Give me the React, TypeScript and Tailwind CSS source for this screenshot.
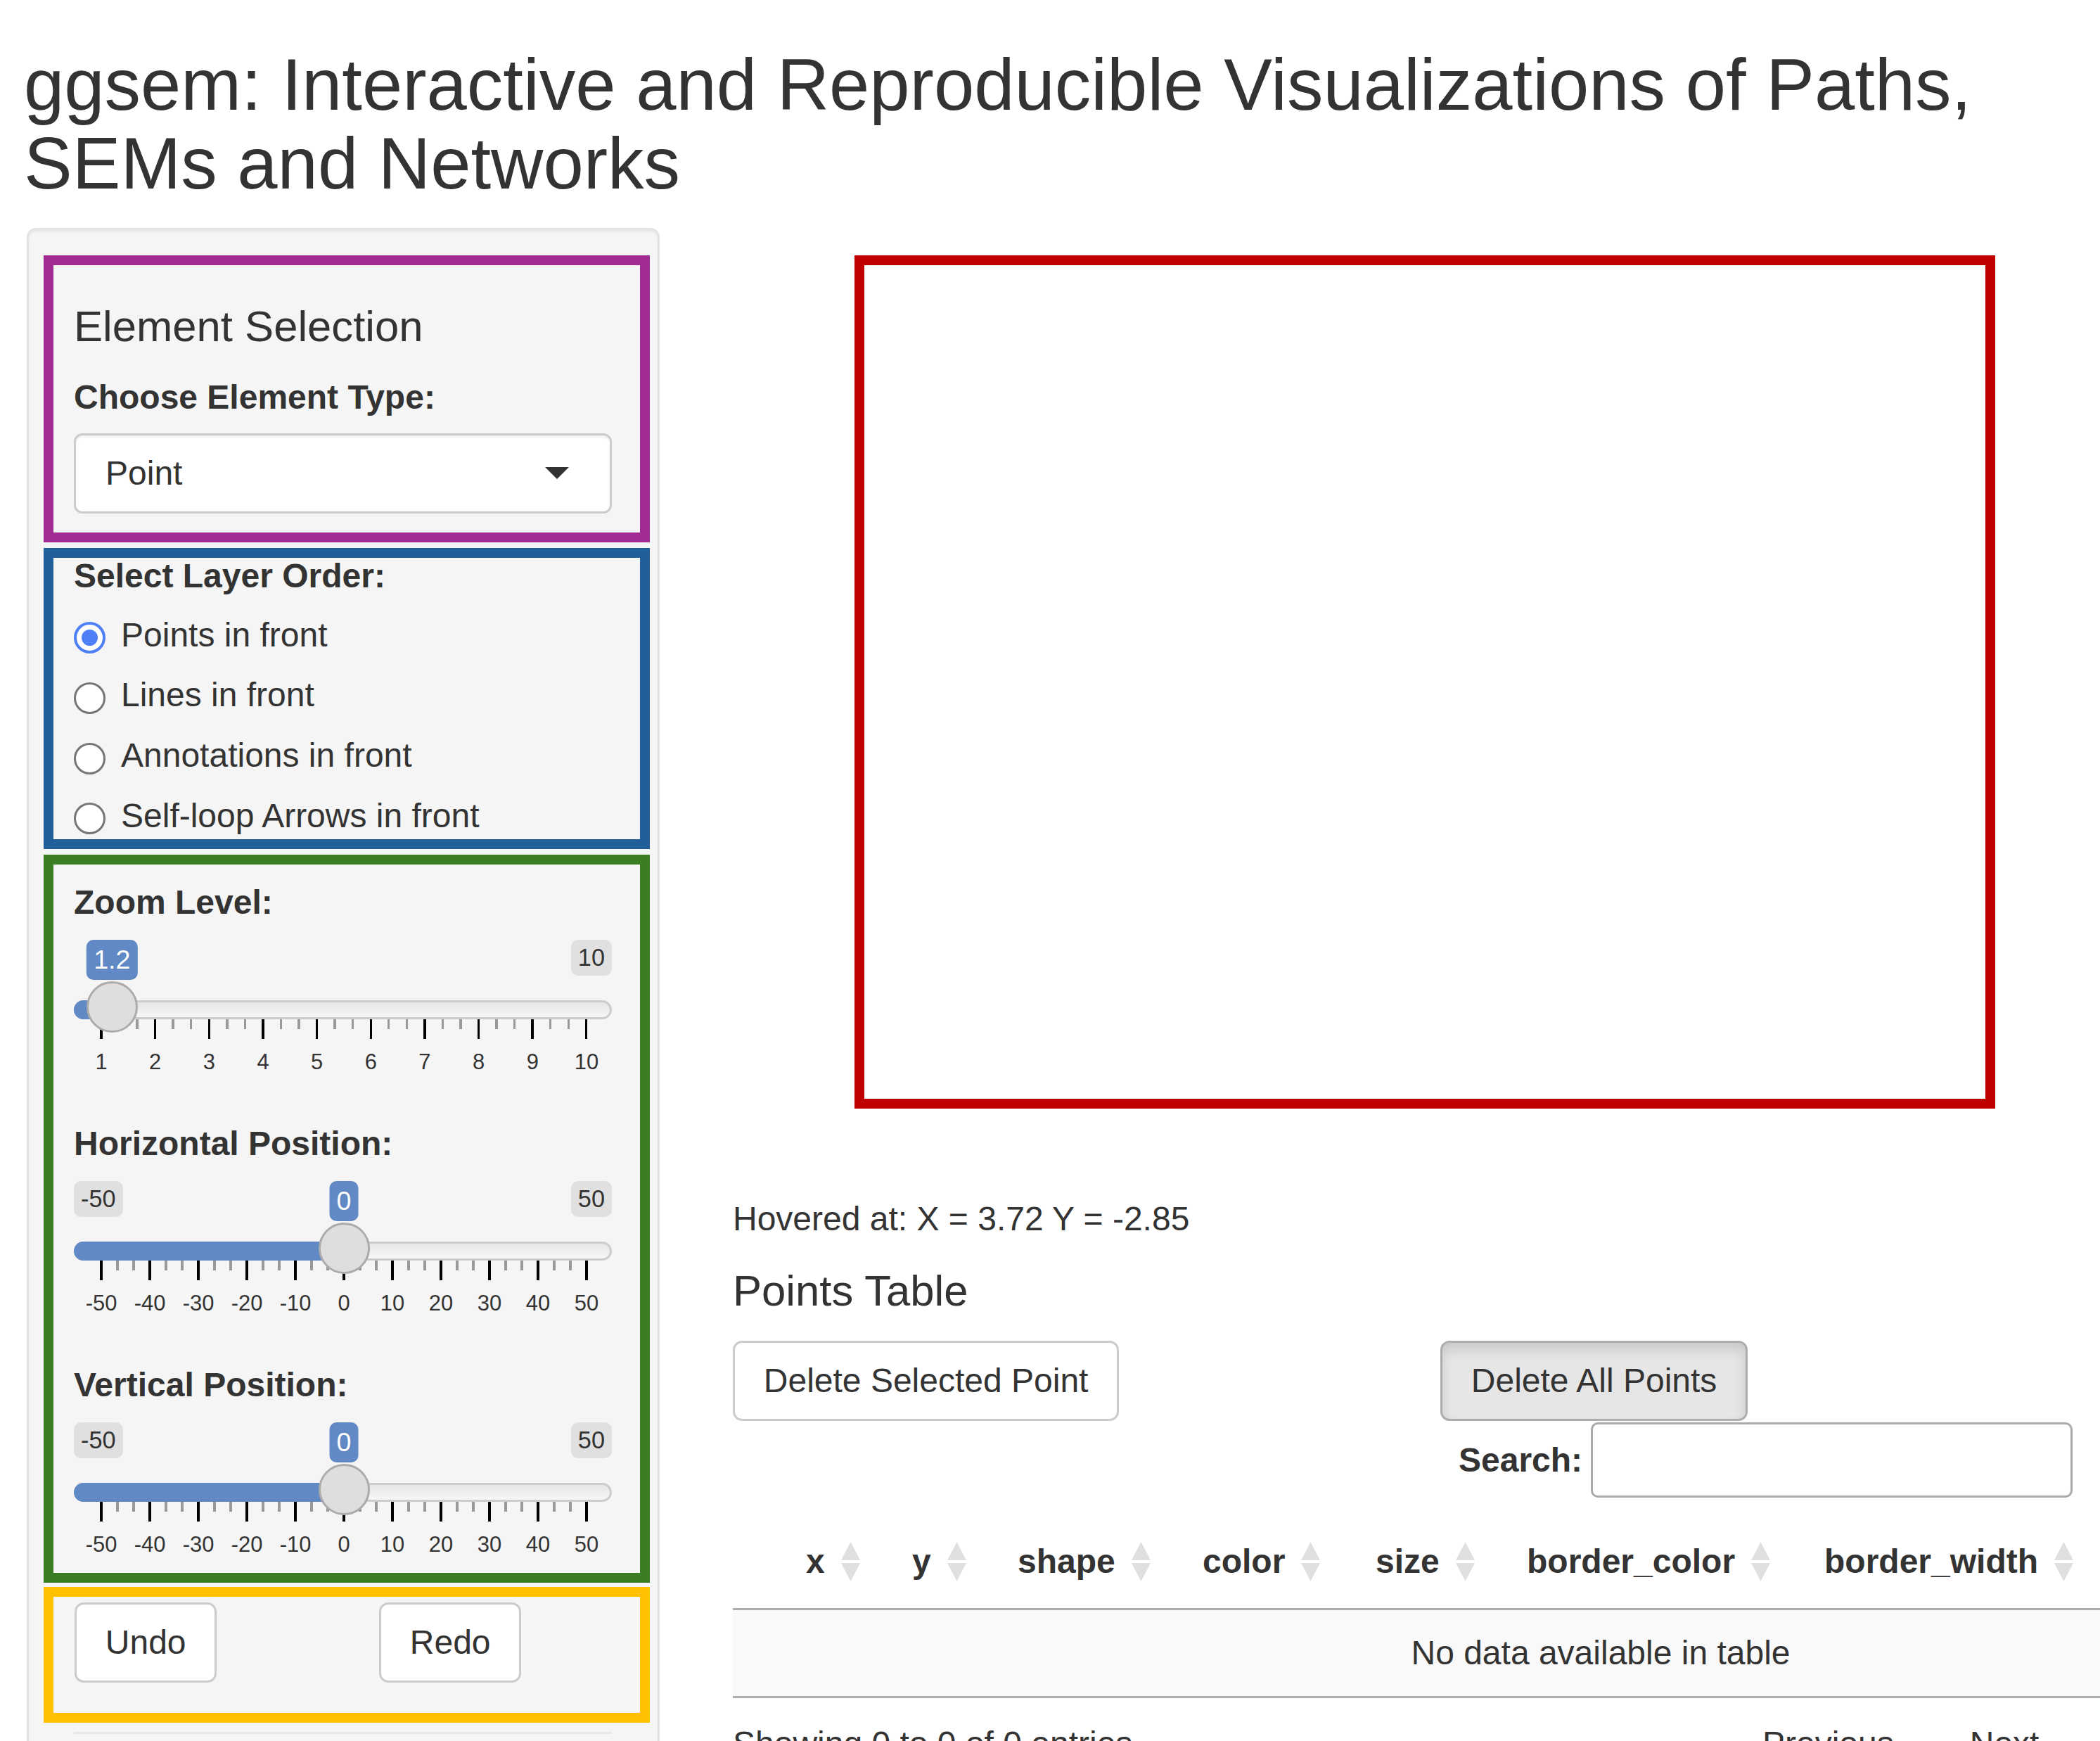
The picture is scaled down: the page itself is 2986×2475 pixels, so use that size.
import React from "react";

function GrayBadge({ children }: { children: React.ReactNode }) {
  return (
    <div className="flex h-[51px] items-center rounded-[10px] bg-[#e0e0e0] px-[10px] text-[34.3px] leading-[51px] text-[#333]">
      {children}
    </div>
  );
}

function Slider({
  label,
  labels,
  frac,
  value,
  min,
  max,
  showMin,
}: {
  label: string;
  labels: string[];
  frac: number;
  value: string;
  min: string;
  max: string;
  showMin: boolean;
}) {
  const nTicks = (labels.length - 1) * 3 + 1;
  const hx = 39 + frac * 690;
  return (
    <div>
      <div className="text-[48px] font-bold leading-[68px]">{label}</div>
      <div className="relative mt-[18.5px] flex h-[57px] items-start justify-between">
        {showMin ? <GrayBadge>{min}</GrayBadge> : <span />}
        <GrayBadge>{max}</GrayBadge>
        <div
          className="absolute top-0 flex h-[57px] -translate-x-1/2 items-center rounded-[10px] bg-[#6089c5] px-[10px] text-[37.7px] leading-[57px] text-white"
          style={{ left: hx }}
        >
          {value}
        </div>
      </div>
      <div className="relative mt-[29.5px] h-[27px]">
        <div className="absolute inset-0 rounded-full border-[3px] border-[#cccccc] bg-[linear-gradient(to_bottom,#dedede_-50%,#ffffff_150%)]" />
        <div className="absolute inset-y-0 left-0 rounded-l-full bg-[#6089c5]" style={{ width: hx }} />
        <div
          className="absolute top-[-27px] h-[73px] w-[73px] rounded-full border-[3px] border-[#ababab] bg-[#dedede]"
          style={{ left: hx - 36.5 }}
        />
      </div>
      <div className="ml-[37.3px] flex h-[28px] w-[693.4px] items-start justify-between">
        {Array.from({ length: nTicks }).map((_, i) =>
          i % 3 === 0 ? (
            <div key={i} className="h-[28px] w-[3.4px] bg-black" />
          ) : (
            <div key={i} className="h-[14px] w-[3.4px] bg-[#999999]" />
          )
        )}
      </div>
      <div className="ml-[39px] mt-[17px] flex h-[31px] w-[690px] justify-between">
        {labels.map((l) => (
          <div key={l} className="flex w-0 justify-center whitespace-nowrap text-[30.9px] leading-[31px] text-[#333]">
            {l}
          </div>
        ))}
      </div>
    </div>
  );
}

function Radio({ checked, label }: { checked?: boolean; label: string }) {
  return (
    <div className="flex h-[68px] items-start">
      {checked ? (
        <div className="mt-[15.7px] flex h-[45px] w-[45px] shrink-0 items-center justify-center rounded-full border-[4px] border-[#4f7ff7] bg-white">
          <div className="h-[23px] w-[23px] rounded-full bg-[#4f7ff7]" />
        </div>
      ) : (
        <div className="mt-[15.7px] h-[45px] w-[45px] shrink-0 rounded-full border-[3.5px] border-[#767676] bg-white" />
      )}
      <span className="ml-[22px] text-[48px] leading-[68px]">{label}</span>
    </div>
  );
}

function SortIcon() {
  return (
    <svg width="27" height="56" viewBox="0 0 27 56" className="ml-[23px] shrink-0">
      <polygon points="13.5,0 27,26 0,26" fill="#e0e0e0" />
      <polygon points="0,30 27,30 13.5,56" fill="#e0e0e0" />
    </svg>
  );
}

const posTicks = ["-50", "-40", "-30", "-20", "-10", "0", "10", "20", "30", "40", "50"];

export default function App() {
  return (
    <div className="h-[2475px] w-[2986px] overflow-hidden bg-white font-['Liberation_Sans',Arial,Helvetica,sans-serif] text-[#333333]">
      <h2 className="pl-[34px] pt-[65px] text-[103px] font-normal leading-[112.2px]">
        ggsem: Interactive and Reproducible Visualizations of Paths,
        <br />
        SEMs and Networks
      </h2>

      <div className="mt-[34.6px] flex items-start">
        {/* Sidebar */}
        <aside className="ml-[38px] w-[900px] shrink-0 rounded-[13px] border-[3px] border-[#e3e3e3] bg-[#f5f5f5] pb-[300px] pl-[21px] pr-[11px] pt-[36px] shadow-[inset_0_3px_3px_rgba(0,0,0,0.05)]">
          {/* Purple */}
          <div className="h-[408px] border-[14px] border-[#a02b93] pl-[29px] pr-[40px]">
            <h4 className="mt-[53px] text-[61.6px] font-normal leading-[67px]">Element Selection</h4>
            <div className="mt-[34.4px] text-[48px] font-bold leading-[68px]">Choose Element Type:</div>
            <div className="mt-[16.6px] flex h-[114px] items-center justify-between rounded-[12px] border-[3px] border-[#cccccc] bg-white pl-[42px] pr-[58px] shadow-[inset_0_3px_3px_rgba(0,0,0,0.06)]">
              <span className="text-[48px] leading-[68px]">Point</span>
              <div className="h-0 w-0 border-l-[17px] border-r-[17px] border-t-[17px] border-l-transparent border-r-transparent border-t-[#333333]" />
            </div>
          </div>

          {/* Blue */}
          <div className="mt-[8px] h-[428px] border-[14px] border-[#215f9a] pl-[29px] pr-[40px]">
            <div className="-mt-[8.5px] text-[48px] font-bold leading-[68px]">Select Layer Order:</div>
            <div className="mt-[16.3px] flex flex-col gap-[17.6px]">
              <Radio checked label="Points in front" />
              <Radio label="Lines in front" />
              <Radio label="Annotations in front" />
              <Radio label="Self-loop Arrows in front" />
            </div>
          </div>

          {/* Green */}
          <div className="mt-[8px] h-[1035px] border-[14px] border-[#3b7d23] pl-[29px] pr-[40px] pt-[20px]">
            <div className="flex flex-col gap-[67px]">
              <Slider
                label="Zoom Level:"
                labels={["1", "2", "3", "4", "5", "6", "7", "8", "9", "10"]}
                frac={0.2 / 9}
                value="1.2"
                min="1"
                max="10"
                showMin={false}
              />
              <Slider label="Horizontal Position:" labels={posTicks} frac={0.5} value="0" min="-50" max="50" showMin />
              <Slider label="Vertical Position:" labels={posTicks} frac={0.5} value="0" min="-50" max="50" showMin />
            </div>
          </div>

          {/* Yellow */}
          <div className="mt-[6px] h-[193px] border-[14px] border-[#ffc000] pl-[30px] pr-[40px]">
            <div className="mt-[8px] grid grid-cols-[433px_1fr]">
              <div>
                <button className="h-[114px] rounded-[13px] border-[3.4px] border-[#cccccc] bg-white px-[40.8px] text-[48px] leading-[68px] text-[#333333]">
                  Undo
                </button>
              </div>
              <div>
                <button className="h-[114px] rounded-[13px] border-[3.4px] border-[#cccccc] bg-white px-[40.8px] text-[48px] leading-[68px] text-[#333333]">
                  Redo
                </button>
              </div>
            </div>
          </div>

          <div className="ml-[43px] mt-[13px] h-[3.4px] w-[765px] bg-[#e6e6e6]" />
        </aside>

        {/* Main */}
        <main className="ml-[104px] w-[2468px] shrink-0">
          <div className="ml-[173px] mt-[39px] h-[1213px] w-[1622px] border-[14px] border-[#c00000] bg-white" />

          <div className="mt-[122.5px] text-[48px] leading-[68px]">Hovered at: X = 3.72 Y = -2.85</div>

          <h4 className="mt-[34.5px] text-[61.6px] font-normal leading-[67px]">Points Table</h4>

          <div className="mt-[38px] grid grid-cols-[1006px_auto] justify-start">
            <div>
              <button className="h-[114px] rounded-[13px] border-[3.4px] border-[#cccccc] bg-white px-[40.8px] text-[48px] leading-[68px] text-[#333333]">
                Delete Selected Point
              </button>
            </div>
            <div>
              <button className="h-[114px] rounded-[13px] border-[3.4px] border-[#adadad] bg-[#e6e6e6] px-[40.8px] text-[48px] leading-[68px] text-[#333333] shadow-[inset_0_10px_17px_rgba(0,0,0,0.125)]">
                Delete All Points
              </button>
            </div>
          </div>

          <div className="ml-[1032px] mt-[2px] flex h-[107px] items-center">
            <span className="text-[48px] font-bold leading-[68px]">Search:</span>
            <div className="ml-[12px] h-[107px] w-[685px] rounded-[10px] border-[3.4px] border-[#aaaaaa] bg-white" />
          </div>

          {/* Table */}
          <div className="mt-[24px] w-[2468px]">
            <div className="flex h-[136px] border-b-[3.4px] border-[#adadad] text-[48px] font-bold leading-[68px]">
              <div className="w-[70px] shrink-0" />
              <div className="flex w-[151px] shrink-0 items-center pl-[34px]">
                <span>x</span>
                <SortIcon />
              </div>
              <div className="flex w-[150px] shrink-0 items-center pl-[34px]">
                <span>y</span>
                <SortIcon />
              </div>
              <div className="flex w-[263px] shrink-0 items-center pl-[34px]">
                <span>shape</span>
                <SortIcon />
              </div>
              <div className="flex w-[246px] shrink-0 items-center pl-[34px]">
                <span>color</span>
                <SortIcon />
              </div>
              <div className="flex w-[215px] shrink-0 items-center pl-[34px]">
                <span>size</span>
                <SortIcon />
              </div>
              <div className="flex w-[423px] shrink-0 items-center pl-[34px]">
                <span>border_color</span>
                <SortIcon />
              </div>
              <div className="flex w-[700px] shrink-0 items-center pl-[34px]">
                <span>border_width</span>
                <SortIcon />
              </div>
            </div>
            <div className="flex h-[125px] items-center justify-center border-b-[3.4px] border-[#adadad] bg-[#f9f9f9] text-[48px] leading-[68px]">
              No data available in table
            </div>
          </div>

          <div className="mt-[31px] flex text-[48px] leading-[68px]">
            <span className="w-[1464px] shrink-0">Showing 0 to 0 of 0 entries</span>
            <span>Previous</span>
            <span className="ml-[108px]">Next</span>
          </div>
        </main>
      </div>
    </div>
  );
}
